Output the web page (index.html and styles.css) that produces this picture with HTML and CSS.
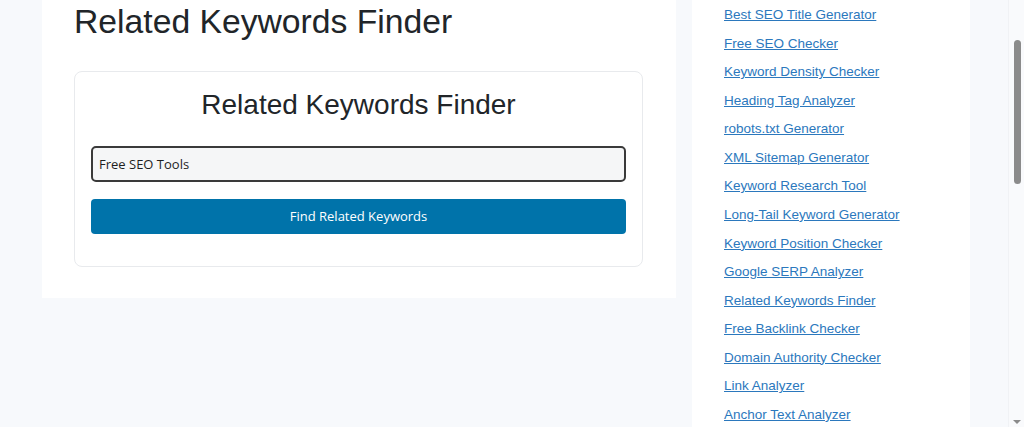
FILE: index.html
```html
<!DOCTYPE html>
<html lang="en">
<head>
<meta charset="utf-8">
<title>Related Keywords Finder</title>
<link rel="stylesheet" href="styles.css">
</head>
<body>
<div class="layout">
  <main class="main">
    <h1 class="page-title">Related Keywords Finder</h1>
    <section class="tool-card">
      <h2 class="tool-title">Related Keywords Finder</h2>
      <input class="tool-input" type="text" value="Free SEO Tools">
      <button class="tool-button" type="button">Find Related Keywords</button>
    </section>
  </main>
  <aside class="sidebar">
    <ul class="tool-list">
      <li><a href="#">Best SEO Title Generator</a></li>
      <li><a href="#">Free SEO Checker</a></li>
      <li><a href="#">Keyword Density Checker</a></li>
      <li><a href="#">Heading Tag Analyzer</a></li>
      <li><a href="#">robots.txt Generator</a></li>
      <li><a href="#">XML Sitemap Generator</a></li>
      <li><a href="#">Keyword Research Tool</a></li>
      <li><a href="#">Long-Tail Keyword Generator</a></li>
      <li><a href="#">Keyword Position Checker</a></li>
      <li><a href="#">Google SERP Analyzer</a></li>
      <li><a href="#">Related Keywords Finder</a></li>
      <li><a href="#">Free Backlink Checker</a></li>
      <li><a href="#">Domain Authority Checker</a></li>
      <li><a href="#">Link Analyzer</a></li>
      <li><a href="#">Anchor Text Analyzer</a></li>
    </ul>
  </aside>
</div>
<div class="scrollbar">
  <div class="scroll-thumb"></div>
  <div class="scroll-arrow"></div>
</div>
</body>
</html>
```

FILE: styles.css
```css
html, body {
  margin: 0;
  padding: 0;
  height: 100%;
  overflow: hidden;
}

body {
  background: #f7f9fc;
  font-family: "Liberation Sans", Arial, sans-serif;
  color: #212529;
}

.layout {
  display: flex;
  align-items: flex-start;
  gap: 16px;
  padding-left: 42px;
}

.main {
  box-sizing: border-box;
  width: 634px;
  flex: none;
  background: #ffffff;
  padding: 2px 33px 31px 32px;
}

.page-title {
  margin: 0 0 29px;
  font-size: 33.7px;
  font-weight: 400;
  line-height: 39.6px;
  color: #212529;
}

.tool-card {
  box-sizing: border-box;
  width: 569px;
  border: 1px solid #e8eaed;
  border-radius: 8px;
  padding: 16px 16px 32px;
}

.tool-title {
  margin: 0 0 24.4px;
  text-align: center;
  font-size: 28px;
  font-weight: 400;
  line-height: 1.2;
  color: #212529;
}

.tool-input {
  display: block;
  box-sizing: border-box;
  width: 100%;
  height: 36px;
  margin: 0;
  padding: 0 6px;
  border: 2px solid #3a3a3a;
  border-radius: 5px;
  background: #f5f6f7;
  font-family: "Open Sans", "Noto Sans", sans-serif;
  font-size: 13px;
  color: #1e1e1e;
  outline: none;
}

.tool-button {
  display: block;
  box-sizing: border-box;
  width: 100%;
  height: 35px;
  margin-top: 17px;
  border: none;
  border-radius: 4px;
  background: #0073aa;
  color: #ffffff;
  font-family: "Open Sans", "Noto Sans", sans-serif;
  font-size: 13px;
}

.sidebar {
  box-sizing: border-box;
  width: 278px;
  flex: none;
  min-height: 427px;
  background: #ffffff;
  padding-left: 32px;
  padding-top: 1px;
}

.tool-list {
  list-style: none;
  margin: 0;
  padding: 0;
}

.tool-list li {
  height: 28.57px;
  line-height: 28.57px;
  font-size: 13.5px;
}

.tool-list a {
  color: #2b78bd;
  text-decoration: underline;
}

.scrollbar {
  position: fixed;
  top: 0;
  right: 0;
  width: 15px;
  height: 100%;
  background: #f9fafc;
  border-left: 1px solid #f0f2f5;
}

.scroll-thumb {
  position: absolute;
  top: 40px;
  left: 5px;
  width: 7px;
  height: 144px;
  border-radius: 4px;
  background: #8b8b8b;
}

.scroll-arrow {
  position: absolute;
  bottom: 3px;
  left: 4px;
  width: 0;
  height: 0;
  border-left: 4px solid transparent;
  border-right: 4px solid transparent;
  border-top: 4px solid #8b8b8b;
}
```
